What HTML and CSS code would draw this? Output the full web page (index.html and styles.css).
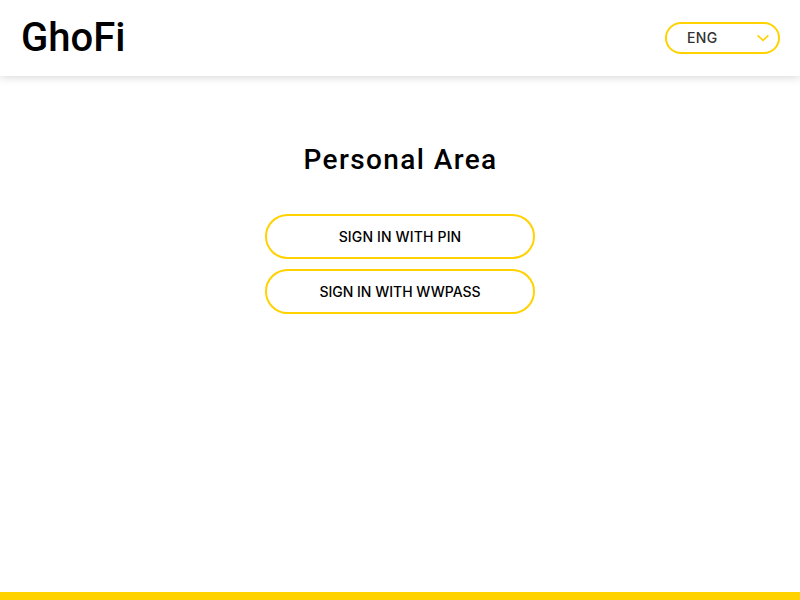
FILE: index.html
```html
<!DOCTYPE html>
<html lang="en">
<head>
<meta charset="utf-8">
<title>GhoFi</title>
<link rel="stylesheet" href="styles.css">
</head>
<body>
<header class="header">
  <a class="logo">GhoFi</a>
  <button class="language" type="button">
    <span>ENG</span>
    <svg class="chevron" width="12" height="8" viewBox="0 0 12 8"><path d="M.6 1.3 6 6.4 11.4 1.3"/></svg>
  </button>
</header>
<main class="main">
  <h1 class="title">Personal Area</h1>
  <button class="button button-pin" type="button">SIGN IN WITH PIN</button>
  <button class="button" type="button">SIGN IN WITH WWPASS</button>
</main>
<footer class="footer"></footer>
</body>
</html>
```
FILE: styles.css
```css
* { box-sizing: border-box; }
body {
  margin: 0;
  height: 100vh;
  display: flex;
  flex-direction: column;
  overflow: hidden;
  background: #fff;
  color: #000;
  font-family: Inter, "Liberation Sans", sans-serif;
}
.header {
  height: 76px;
  flex: none;
  display: flex;
  align-items: center;
  justify-content: space-between;
  padding: 0 20px 0 21px;
  box-shadow: 0 0 10px rgba(0, 0, 0, .2);
}
.logo {
  font: 500 40px/46px Roboto, sans-serif;
}
.language {
  width: 115px;
  height: 32px;
  display: flex;
  align-items: center;
  justify-content: space-between;
  padding: 0 9.5px 0 20px;
  border: 2px solid #ffd200;
  border-radius: 16px;
  background: #fff;
  color: #333;
  font: 500 14px/20px Inter, sans-serif;
  letter-spacing: .3px;
}
.chevron {
  fill: none;
  stroke: #ffd200;
  stroke-width: 1.7;
}
.main {
  flex: 1;
  display: flex;
  flex-direction: column;
  align-items: center;
  padding-top: 64px;
}
.title {
  margin: 0 0 34px;
  padding-left: 1px;
  font: 500 28px/40px Roboto, sans-serif;
  letter-spacing: 1.4px;
}
.button {
  width: 270px;
  height: 45px;
  margin-bottom: 10px;
  padding: 0;
  border: 2px solid #ffd200;
  border-radius: 23px;
  background: #fff;
  color: #000;
  font: 500 14px/20px Inter, sans-serif;
}
.button-pin {
  letter-spacing: .15px;
}
.footer {
  height: 8px;
  flex: none;
  background: #ffd200;
}
```
